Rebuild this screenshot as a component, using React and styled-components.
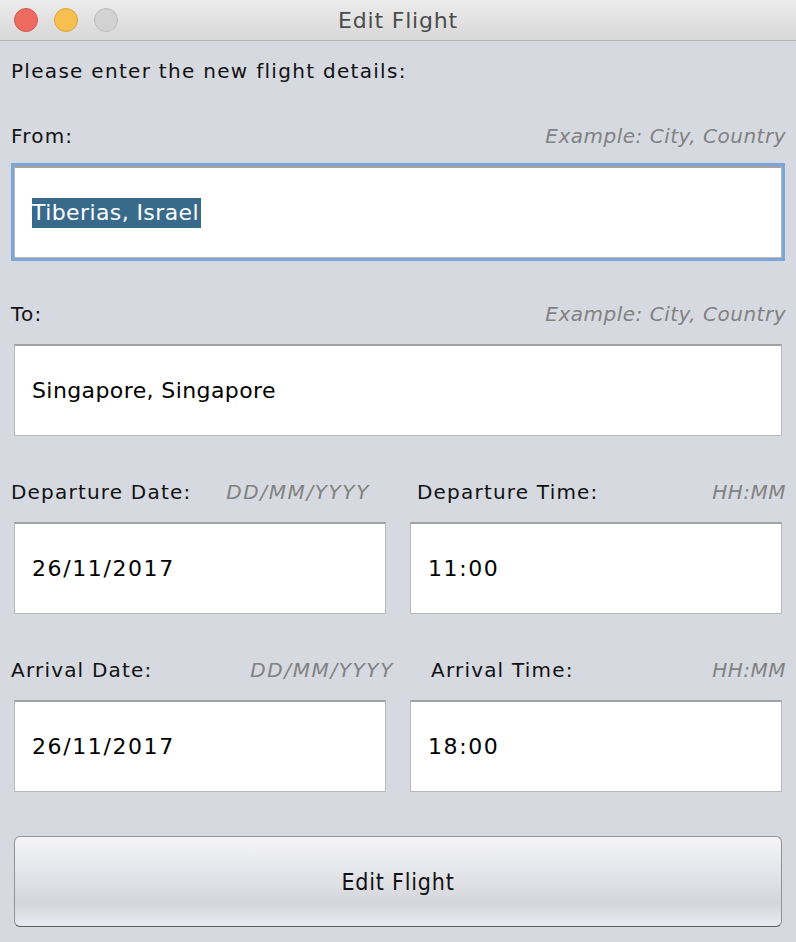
import React from 'react';
import styled, { createGlobalStyle } from 'styled-components';

const GlobalStyle = createGlobalStyle`
  html, body {
    margin: 0;
    padding: 0;
    background: #d6d9e0;
  }
  * {
    box-sizing: border-box;
  }
`;

const Window = styled.div`
  width: 796px;
  height: 942px;
  background: #d6d9e0;
  font-family: "DejaVu Sans", Verdana, sans-serif;
  overflow: hidden;
`;

const TitleBar = styled.div`
  height: 41px;
  display: flex;
  align-items: center;
  justify-content: center;
  position: relative;
  background: linear-gradient(#ececec, #d7d7d7);
  border-bottom: 1px solid #b3b3b3;
`;

const Lights = styled.div`
  position: absolute;
  left: 14px;
  top: 8px;
  display: flex;
  gap: 16px;
`;

const Light = styled.span`
  width: 24px;
  height: 24px;
  border-radius: 50%;
  background: ${(p) => p.$fill};
  border: 1px solid ${(p) => p.$edge};
`;

const Title = styled.div`
  font-size: 22px;
  letter-spacing: 0.8px;
  color: #4b4b4b;
`;

const Content = styled.div`
  padding: 15px 14px 0;
`;

const Intro = styled.div`
  height: 30px;
  line-height: 30px;
  margin: 0 0 35px -3px;
  font-size: 20px;
  letter-spacing: 1.3px;
  color: #111;
`;

const Section = styled.div`
  margin-bottom: 41px;
`;

const Row = styled.div`
  display: grid;
  grid-template-columns: 1fr 1fr;
  column-gap: 24px;
  margin-bottom: 41px;
`;

const LabelRow = styled.div`
  height: 30px;
  display: flex;
  align-items: center;
  justify-content: space-between;
  margin: 0 ${(p) => p.$mr ?? -4}px 15px ${(p) => p.$ml ?? -3}px;
  white-space: nowrap;
`;

const Label = styled.span`
  font-size: 20px;
  letter-spacing: 1.2px;
  color: #111;
`;

const Hint = styled.span`
  font-size: 20px;
  font-style: italic;
  letter-spacing: ${(p) => (p.$wide ? '1.6px' : '0.5px')};
  color: #828282;
`;

const Field = styled.div`
  height: 92px;
  display: flex;
  align-items: center;
  padding-left: 17px;
  background: #fff;
  border: 1px solid #b9b9b9;
  border-top: 2px solid #a2a2a2;
  box-shadow: ${(p) => (p.$focused ? '0 0 0 3px #7ba7d8' : 'none')};
  font-size: 22px;
  letter-spacing: ${(p) => (p.$numeric ? '1.6px' : '0.4px')};
  color: #000;
`;

const Selected = styled.span`
  background: #386a8b;
  color: #fff;
  line-height: 30px;
  padding-right: 2px;
`;

const Button = styled.button`
  display: flex;
  align-items: center;
  justify-content: center;
  width: 100%;
  height: 91px;
  margin-top: 44px;
  padding: 0;
  border: 1px solid #929292;
  border-bottom-color: #5c5c5c;
  border-radius: 6px;
  background: linear-gradient(#f5f5f7 0%, #e4e5ea 40%, #d4d6dd 75%, #e9ebf2 100%);
  font-family: "DejaVu Sans Condensed", "DejaVu Sans", sans-serif;
  font-size: 23px;
  letter-spacing: 0.8px;
  color: #111;
`;

const LabeledField = ({ label, hint, value, focused, selected, numeric, ml, mr }) => (
  <div>
    <LabelRow $ml={ml} $mr={mr}>
      <Label>{label}</Label>
      {hint && <Hint $wide={numeric && hint.includes('/')}>{hint}</Hint>}
    </LabelRow>
    <Field $focused={focused} $numeric={numeric}>
      {selected ? <Selected>{value}</Selected> : value}
    </Field>
  </div>
);

const App = () => (
  <>
    <GlobalStyle />
    <Window>
      <TitleBar>
        <Lights>
          <Light $fill="#ee6b60" $edge="#d5574d" />
          <Light $fill="#f7bf4f" $edge="#dca33c" />
          <Light $fill="#d2d2d2" $edge="#bcbcbc" />
        </Lights>
        <Title>Edit Flight</Title>
      </TitleBar>

      <Content>
        <Intro>Please enter the new flight details:</Intro>

        <Section>
          <LabeledField label="From:" hint="Example: City, Country" value="Tiberias, Israel" focused selected />
        </Section>

        <Section>
          <LabeledField label="To:" hint="Example: City, Country" value="Singapore, Singapore" />
        </Section>

        <Row>
          <LabeledField label="Departure Date:" hint="DD/MM/YYYY" value="26/11/2017" numeric mr={16} />
          <LabeledField label="Departure Time:" hint="HH:MM" value="11:00" numeric ml={7} />
        </Row>

        <Row>
          <LabeledField label="Arrival Date:" hint="DD/MM/YYYY" value="26/11/2017" numeric mr={-8} />
          <LabeledField label="Arrival Time:" hint="HH:MM" value="18:00" numeric ml={21} />
        </Row>

        <Button type="button">Edit Flight</Button>
      </Content>
    </Window>
  </>
);

export default App;
